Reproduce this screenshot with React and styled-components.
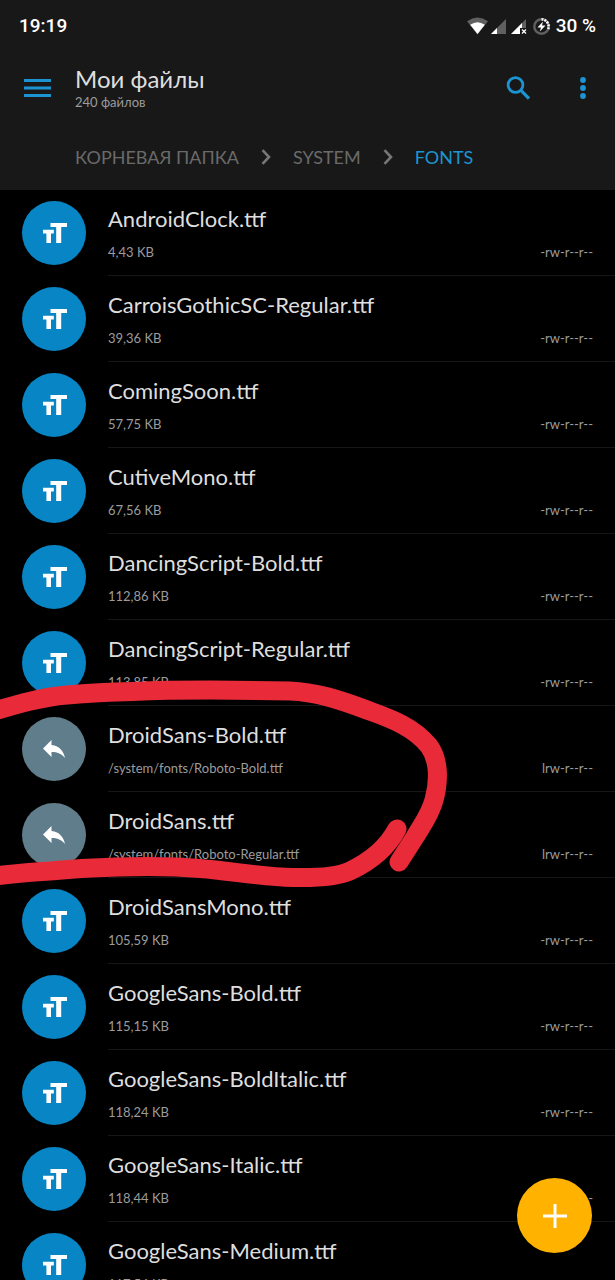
import React from "react"
import styled, { createGlobalStyle } from "styled-components"

const colors = {
  header: "#181818",
  list: "#000000",
  line: "#161616",
  accent: "#1c94d2",
  font: "#0785c5",
  link: "#607d8b",
  fab: "#ffb300",
  marker: "#e92a39",
  title: "#dedede",
  muted: "#9c9c9c",
  crumb: "#6a6a6a",
}

const GlobalStyle = createGlobalStyle`
  * {
    box-sizing: border-box;
  }

  body {
    margin: 0;
    background: ${colors.list};
    font-family: Lato, "Open Sans", sans-serif;
  }

  button {
    padding: 0;
    border: 0;
    background: none;
    cursor: pointer;
  }
`

const files = [
  { name: "AndroidClock.ttf", info: "4,43 KB" },
  { name: "CarroisGothicSC-Regular.ttf", info: "39,36 KB" },
  { name: "ComingSoon.ttf", info: "57,75 KB" },
  { name: "CutiveMono.ttf", info: "67,56 KB" },
  { name: "DancingScript-Bold.ttf", info: "112,86 KB" },
  { name: "DancingScript-Regular.ttf", info: "113,85 KB" },
  { name: "DroidSans-Bold.ttf", info: "/system/fonts/Roboto-Bold.ttf", link: true },
  { name: "DroidSans.ttf", info: "/system/fonts/Roboto-Regular.ttf", link: true },
  { name: "DroidSansMono.ttf", info: "105,59 KB" },
  { name: "GoogleSans-Bold.ttf", info: "115,15 KB" },
  { name: "GoogleSans-BoldItalic.ttf", info: "118,24 KB" },
  { name: "GoogleSans-Italic.ttf", info: "118,44 KB" },
  { name: "GoogleSans-Medium.ttf", info: "117,54 KB" },
]

const StatusIcons = () => (
  <svg width="84" height="20" viewBox="0 0 84 20" aria-hidden="true">
    <path d="M0 5.2Q10.500-2.200 21 5.200L10.500 18.500Z" fill="#606060" />
    <path d="M3.200 8.800Q10.500 3.600 17.800 8.800L10.500 18Z" fill="#fff" />
    <path d="M24 18L39 3V18Z" fill="#606060" />
    <path d="M24 18L30 12V18Z" fill="#fff" />
    <path d="M44 18L59 3V12H53V18Z" fill="#606060" />
    <path d="M44 18L55 7V12H53V18Z" fill="#fff" />
    <path d="M55 13.500L59 17.500M59 13.500L55 17.500" stroke="#fff" strokeWidth="1.300" />
    <circle cx="74.500" cy="10.500" r="7.200" fill="none" stroke="#606060" strokeWidth="2.400" />
    <path
      d="M74.500 3.300A7.200 7.200 0 0 1 81.200 13"
      fill="none"
      stroke="#fff"
      strokeWidth="2.600"
      strokeDasharray="2 1"
    />
    <path d="M76 5.500L70.500 11.500H74L72.800 15.500L78.500 9.500H75Z" fill="#fff" />
  </svg>
)

const MenuIcon = () => (
  <svg width="27" height="20" viewBox="0 0 27 20" aria-hidden="true">
    <path d="M0 2.500H27M0 10H27M0 17.500H27" stroke={colors.accent} strokeWidth="3" />
  </svg>
)

const SearchIcon = () => (
  <svg width="24" height="24" viewBox="0 0 24 24" fill="none" aria-hidden="true">
    <circle cx="9.500" cy="9" r="7.400" stroke={colors.accent} strokeWidth="2.800" />
    <path d="M14.700 14.200L23 22.500" stroke={colors.accent} strokeWidth="3.200" />
  </svg>
)

const MoreIcon = () => (
  <svg width="6" height="22" viewBox="0 0 6 22" fill={colors.accent} aria-hidden="true">
    <circle cx="3" cy="3" r="2.900" />
    <circle cx="3" cy="11" r="2.900" />
    <circle cx="3" cy="19" r="2.900" />
  </svg>
)

const Chevron = () => (
  <svg width="10" height="16" viewBox="0 0 10 16" fill="none" aria-hidden="true">
    <path d="M1.500 1.200L8 8L1.500 14.800" stroke="#777" strokeWidth="2.600" />
  </svg>
)

const FontIcon = () => (
  <svg width="25" height="20" viewBox="0 0 25 20" fill="#fff" aria-hidden="true">
    <path d="M8.500 0H25V4H19.200V20H14.200V4H8.500Z" />
    <path d="M1 6.800H11.800V10.500H9V20H4.400V10.500H1Z" />
  </svg>
)

const LinkIcon = () => (
  <svg width="22" height="18" viewBox="0 0 22 18" fill="#fff" aria-hidden="true">
    <path d="M8.500 0V5C17 6 20.500 11.500 22 18C18.500 13.800 14.500 12 8.500 12V17L0 8.500Z" />
  </svg>
)

const PlusIcon = () => (
  <svg width="24" height="24" viewBox="0 0 24 24" aria-hidden="true">
    <path d="M12 0V24M0 12H24" stroke="#fff" strokeWidth="3" />
  </svg>
)

const Marker = () => (
  <MarkerSvg width="460" height="220" viewBox="0 680 460 220" aria-hidden="true">
    <path d="M-12 713C18 704 42 697 67 695C90 693 112 692 133 691.500C180 689.500 240 690 290 691C315 692 338 699 367 710C389 718 413 726 429 746C438 758 440 778 434 800C430 815 422 825 415 837L399 862" />
    <path d="M397 829C388 846 371 861 350 871C337 877 315 878 293 877.500C262 877 232 871 200 868.500C150 864 80 868 50 871C30 872 10 874 -12 877" />
  </MarkerSvg>
)

const FileRow = ({ name, info, link }) => (
  <Row>
    <Badge $link={link}>{link ? <LinkIcon /> : <FontIcon />}</Badge>
    <Details>
      <FileName>{name}</FileName>
      <Meta>
        <span>{info}</span>
        <span>{link ? "lrw-r--r--" : "-rw-r--r--"}</span>
      </Meta>
    </Details>
  </Row>
)

const App = () => (
  <Page>
    <GlobalStyle />
    <Header>
      <StatusBar>
        <span>19:19</span>
        <StatusRight>
          <StatusIcons />
          <span>30 %</span>
        </StatusRight>
      </StatusBar>
      <Toolbar>
        <button type="button" aria-label="Меню">
          <MenuIcon />
        </button>
        <Heading>
          <Title>Мои файлы</Title>
          <Subtitle>240 файлов</Subtitle>
        </Heading>
        <Actions>
          <button type="button" aria-label="Поиск">
            <SearchIcon />
          </button>
          <button type="button" aria-label="Ещё">
            <MoreIcon />
          </button>
        </Actions>
      </Toolbar>
      <Crumbs>
        <Crumb href="#root">КОРНЕВАЯ ПАПКА</Crumb>
        <Chevron />
        <Crumb href="#system">SYSTEM</Crumb>
        <Chevron />
        <Crumb href="#fonts" $active>
          FONTS
        </Crumb>
      </Crumbs>
    </Header>
    <List>
      {files.map(file => (
        <FileRow key={file.name} {...file} />
      ))}
    </List>
    <Marker />
    <Fab type="button" aria-label="Добавить">
      <PlusIcon />
    </Fab>
  </Page>
)

const Page = styled.div`
  position: relative;
  display: flex;
  flex-direction: column;
  height: 100vh;
  overflow: hidden;
`

const Header = styled.header`
  flex: none;
  padding-bottom: 16px;
  background: ${colors.header};
`

const StatusBar = styled.div`
  display: flex;
  align-items: center;
  justify-content: space-between;
  height: 52px;
  padding: 0 19px;
  color: #fff;
  font: 500 19px/24px Roboto, sans-serif;
`

const StatusRight = styled.div`
  display: flex;
  align-items: center;
  gap: 5px;
`

const Toolbar = styled.div`
  display: flex;
  align-items: center;
  height: 72px;
  padding: 0 29px 0 24px;

  button {
    display: flex;
  }
`

const Heading = styled.div`
  flex: 1;
  padding-left: 24px;
`

const Title = styled.h1`
  margin: 0;
  color: ${colors.title};
  font-size: 24px;
  font-weight: 400;
  line-height: 28px;
`

const Subtitle = styled.div`
  color: ${colors.muted};
  font-size: 13px;
  line-height: 18px;
`

const Actions = styled.div`
  display: flex;
  align-items: center;
  gap: 50px;
`

const Crumbs = styled.nav`
  display: flex;
  align-items: center;
  gap: 22px;
  height: 50px;
  padding: 16px 24px 0 75px;
`

const Crumb = styled.a`
  color: ${({ $active }) => ($active ? colors.accent : colors.crumb)};
  font-size: 18px;
  line-height: 24px;
  text-decoration: none;
  white-space: nowrap;
`

const List = styled.ul`
  flex: 1;
  min-height: 0;
  margin: 0;
  padding: 0;
  overflow: hidden;
  background: ${colors.list};
  list-style: none;
`

const Row = styled.li`
  display: flex;
  align-items: center;
  gap: 22px;
  height: 86px;
  padding-left: 22px;
`

const Badge = styled.div`
  display: flex;
  flex: none;
  align-items: center;
  justify-content: center;
  width: 64px;
  height: 64px;
  border-radius: 50%;
  background: ${({ $link }) => ($link ? colors.link : colors.font)};
`

const Details = styled.div`
  flex: 1;
  height: 100%;
  padding: 15px 22px 0 0;
  border-bottom: 1px solid ${colors.line};
`

const FileName = styled.div`
  color: ${colors.title};
  font-size: 22px;
  line-height: 28px;
`

const Meta = styled.div`
  display: flex;
  justify-content: space-between;
  padding-top: 11px;
  color: ${colors.muted};
  font-size: 13px;
  line-height: 16px;
`

const MarkerSvg = styled.svg`
  position: absolute;
  top: 680px;
  left: 0;
  fill: none;
  stroke: ${colors.marker};
  stroke-width: 19px;
  stroke-linecap: round;
  stroke-linejoin: round;
  pointer-events: none;
`

const Fab = styled.button`
  position: absolute;
  right: 23px;
  bottom: 27px;
  display: flex;
  align-items: center;
  justify-content: center;
  width: 75px;
  height: 75px;

  && {
    border-radius: 50%;
    background: ${colors.fab};
  }
`

export default App
